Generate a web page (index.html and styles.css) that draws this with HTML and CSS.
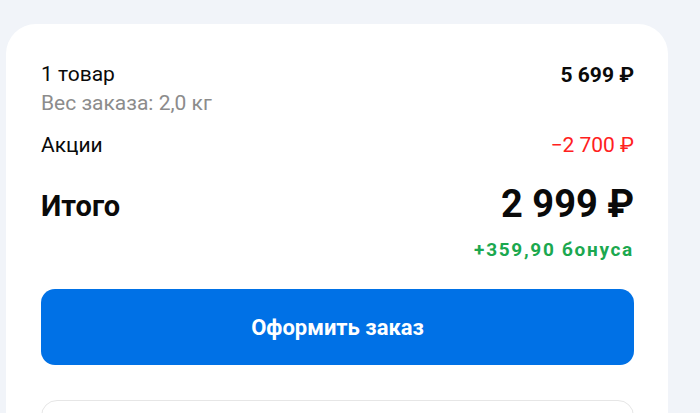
FILE: index.html
```html
<!DOCTYPE html>
<html lang="ru">
<head>
<meta charset="utf-8">
<link rel="stylesheet" href="styles.css">
</head>
<body>
<div class="card">
  <div class="row">
    <div class="left">
      <div class="label">1 товар</div>
      <div class="sub">Вес заказа: 2,0 кг</div>
    </div>
    <div class="price">5 699 ₽</div>
  </div>
  <div class="row promo">
    <div class="label">Акции</div>
    <div class="discount">−2 700 ₽</div>
  </div>
  <div class="row total">
    <div class="total-label">Итого</div>
    <div class="total-right">
      <div class="total-price">2 999 ₽</div>
      <div class="bonus">+359,90 бонуса</div>
    </div>
  </div>
  <button class="checkout">Оформить заказ</button>
  <div class="extra"></div>
</div>
</body>
</html>
```
FILE: styles.css
```css
html, body {
  margin: 0;
  padding: 0;
}
body {
  background: #f1f4f9;
  font-family: Roboto, "Noto Sans", sans-serif;
  color: #0a0a0a;
  height: 413px;
  overflow: hidden;
}
.card {
  margin: 24px 32px 0 6px;
  background: #fff;
  border-radius: 30px 30px 0 0;
  padding: 37px 34px 0 35px;
  height: 389px;
  box-sizing: border-box;
  overflow: hidden;
}
.row {
  display: flex;
  justify-content: space-between;
  align-items: flex-start;
}
.label {
  font-size: 21px;
  line-height: 26px;
}
.sub {
  font-size: 21px;
  line-height: 26px;
  color: #8c8c8c;
  margin-top: 3px;
}
.price {
  font-size: 21px;
  line-height: 26px;
  font-weight: 700;
  margin-top: 1px;
}
.promo {
  margin-top: 16px;
}
.discount {
  font-size: 21px;
  line-height: 26px;
  color: #ff2020;
}
.total {
  margin-top: 23px;
}
.total-label {
  font-size: 29px;
  font-weight: 700;
  line-height: 36px;
  margin-top: 7px;
}
.total-right {
  display: flex;
  flex-direction: column;
  align-items: flex-end;
}
.total-price {
  font-size: 38px;
  font-weight: 700;
  line-height: 46px;
}
.bonus {
  font-size: 19px;
  font-weight: 700;
  line-height: 22px;
  color: #1ba84f;
  margin-top: 12px;
  letter-spacing: 1.7px;
}
.checkout {
  display: block;
  width: 100%;
  height: 76px;
  margin-top: 28px;
  border: none;
  border-radius: 14px;
  background: #0071e6;
  color: #fff;
  font-family: inherit;
  font-size: 22px;
  font-weight: 700;
}
.extra {
  margin-top: 35px;
  height: 60px;
  border: 1px solid #e6e6e6;
  border-radius: 16px;
}
```
